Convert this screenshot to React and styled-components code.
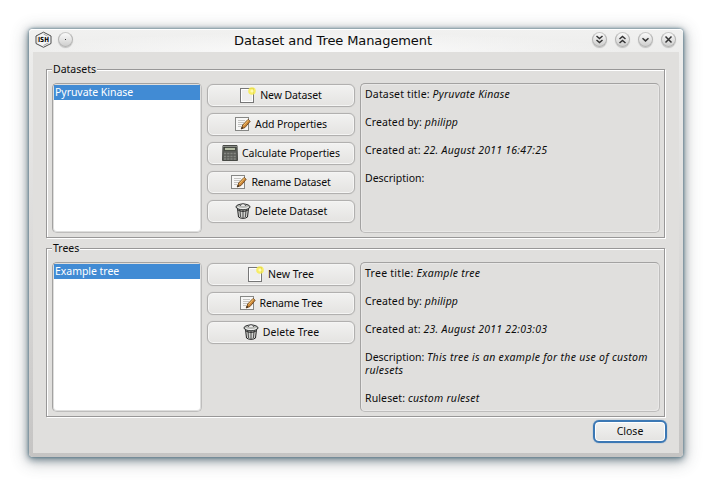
import React from "react";
import styled, { createGlobalStyle, css } from "styled-components";

const Global = createGlobalStyle`
  * { box-sizing: border-box; }
  body {
    margin: 0;
    background: #fff;
    color: #0c0c0c;
    font: 10.5px/13px "Noto Sans", "Open Sans", sans-serif;
    overflow: hidden;
  }
`;

const Desktop = styled.main`
  width: 712px;
  height: 486px;
  padding: 29px 29px 0;
`;

const Window = styled.section`
  width: 654px;
  height: 428px;
  padding: 0 4px 4px;
  border-radius: 4px;
  background: linear-gradient(#f1f1f0 0, #ececeb 30px, #d8d7d6 60%, #c5c4c3 100%);
  box-shadow: inset 0 1px 0 #fff, 0 0 3px #4d7385, 0 2px 7px 1px rgba(55, 85, 100, 0.6), 0 3px 16px 3px rgba(60, 70, 75, 0.3);
`;

const TitleBar = styled.header`
  height: 23px;
  display: grid;
  grid-template-columns: 46px 1fr 91px;
  align-items: center;
  margin: 0 -3px;
  padding: 0 6px 1px 5px;
  background: radial-gradient(ellipse at 45% 100%, #fcfcfc 0, rgba(250, 250, 250, 0) 60%);
`;

const Title = styled.h1`
  margin: 0;
  padding: 1px 0 0;
  font: 400 13px/22px "DejaVu Sans", sans-serif;
  letter-spacing: -0.1px;
  text-align: center;
  white-space: nowrap;
`;

const Controls = styled.div`
  display: flex;
  align-items: center;
  justify-content: ${(p) => (p.$end ? "flex-end" : "flex-start")};
  gap: ${(p) => p.$gap}px;
  margin-top: -3px;
`;

const RoundButton = styled.button`
  flex: none;
  display: grid;
  place-items: center;
  width: 15px;
  height: 15px;
  padding: 0;
  border: 1px solid #b4b4b3;
  border-top-color: #c8c8c7;
  border-radius: 50%;
  background: linear-gradient(#fafafa, #cfcfce);
  box-shadow: 0 1px 1px rgba(0, 0, 0, 0.2);
`;

const Content = styled.div`
  height: 401px;
  padding: 17px 12px 0 13px;
  background: #e0dfdd;
`;

const Group = styled.section`
  width: 619px;
  height: 169px;
  margin-bottom: 10px;
  border: 1px solid #989797;
  box-shadow: inset 1px 1px 0 #fff, 1px 1px 0 #fff;
`;

const Legend = styled.h2`
  width: max-content;
  height: 13px;
  margin: -7px 0 7px 5px;
  padding: 0 1px;
  font-size: inherit;
  font-weight: 400;
  background: #e0dfdd;
`;

const Columns = styled.div`
  display: grid;
  grid-template: 150px / 150px 148px 300px;
  column-gap: 5px;
  margin-left: 5px;
`;

const frame = css`
  border: 1px solid #a3a2a1;
  border-right-color: #bebdbc;
  border-bottom-color: #bebdbc;
  border-radius: 5px;
`;

const List = styled.div`
  ${frame}
  padding: 1px;
  background: #fff;
  box-shadow: inset 0 0 0 1px #dededd;
`;

const ListItem = styled.div`
  height: 15px;
  padding-left: 1px;
  line-height: 14px;
  letter-spacing: -0.04px;
  color: #fff;
  background: #418bd4;
`;

const Actions = styled.div`
  display: flex;
  flex-direction: column;
  gap: 6px;
  padding-top: 1px;
`;

const Button = styled.button`
  display: flex;
  align-items: center;
  justify-content: center;
  gap: 4px;
  width: ${(p) => (p.$focused ? 74 : 148)}px;
  height: 23px;
  flex: none;
  padding: 0 0 1px;
  border: ${(p) => (p.$focused ? "2px solid #3c78b4" : "1px solid #b1b0af")};
  border-radius: 6px;
  color: #0c0c0c;
  font: inherit;
  line-height: 12px;
  letter-spacing: ${(p) => p.$spacing}px;
  white-space: nowrap;
  background: linear-gradient(#f2f2f1, #e4e3e1);
  box-shadow: ${(p) =>
    p.$focused
      ? "inset 0 0 0 1px #fff, 0 0 1px #3c78b4"
      : "inset 0 0 0 1px #f5f5f4, 0 0 1px #b5b4b3"};
`;

const Info = styled.div`
  ${frame}
  padding: 4px 4px 0;
  box-shadow: inset 1px 1px 0 #e9e8e7, inset -1px -1px 0 #e9e8e7;
`;

const Field = styled.p`
  margin: 0 0 15px;
  letter-spacing: ${(p) => p.$spacing}px;

  &:last-child {
    margin-bottom: 0;
  }
`;

const Value = styled.em`
  letter-spacing: ${(p) => p.$spacing}px;
`;

const Footer = styled.footer`
  display: flex;
  justify-content: flex-end;
  margin: -7px 0 0;
`;

const AppLogo = () => (
  <svg width="18" height="18" viewBox="0 0 18 18">
    <path d="M8.5 2.2 16 6v7.5L8.500 17.3 1 13.500V6z" fill="#f4f4f4" stroke="#4b4b4b" />
    <path d="m8.5 4 5.5 3M3 7v5.500M14 12.500l-5.500 3" fill="none" stroke="#888" strokeWidth=".7" />
    <rect x="2.5" y="6.5" width="12" height="6" fill="#f4f4f4" />
    <text x="8.5" y="12.3" textAnchor="middle" fontSize="7" fontWeight="700" fontFamily="DejaVu Sans" textLength="11" lengthAdjust="spacingAndGlyphs">ISH</text>
  </svg>
);

const glyphs = {
  dot: "M6 6.5h1",
  below: "m3.5 3 3 2.5 3-2.5m-6 4 3 2.5 3-2.5",
  above: "m3.5 6 3-2.5 3 2.5m-6 4 3-2.5 3 2.5",
  minimize: "m3.5 5.3 3 2.6 3-2.6",
  close: "m3.5 3.5 6 6m0-6-6 6",
};

const Glyph = ({ name }) => (
  <svg width="13" height="13" viewBox="0 0 13 13">
    <path d={glyphs[name]} fill="none" stroke="#333" strokeWidth={name === "dot" ? 1 : 1.5} />
  </svg>
);

const NewIcon = () => (
  <svg width="16" height="16" viewBox="0 0 16 16">
    <rect x=".5" y="1.5" width="13" height="14" fill="#eeeeed" stroke="#777" />
    <path d="M1.5 14.5v-12h11v12z" fill="none" stroke="#fff" />
    <circle cx="12" cy="4" r="3.8" fill="#f8ec4c" fillOpacity=".85" />
    <circle cx="12" cy="4" r="1.6" fill="#fffbb0" />
  </svg>
);

const EditIcon = () => (
  <svg width="16" height="16" viewBox="0 0 16 16">
    <rect x=".5" y="1.5" width="13" height="13" fill="#f7f7f6" stroke="#868785" />
    <path d="M3 4.5h7M3 6.5h6M3 8.5h5M3 10.5h3" stroke="#c4c4c2" />
    <path d="m6.2 13 1.5-4L13 3.5l2.2 1.8-5.2 6.2z" fill="#cf8a3b" stroke="#6c4319" strokeWidth=".9" />
    <path d="m8.5 9.5 5-5.5" stroke="#f5c66b" />
    <path d="m6.2 13 .8-2.2 1.2 1.2z" fill="#222" />
  </svg>
);

const CalculatorIcon = () => (
  <svg width="16" height="16" viewBox="0 0 16 16">
    <path d="M1 .5h14l.5 15H.5z" fill="#5b5d59" stroke="#484a46" />
    <path d="M1 1.5h14" stroke="#8b8d88" />
    <rect x="2.5" y="2.5" width="11" height="3" fill="#b5bda5" stroke="#393c36" strokeWidth=".8" />
    <path d="M2 8.5h12M2 11.5h12M2 14h12" stroke="#858782" strokeWidth="1.6" strokeDasharray="2.2 1" />
  </svg>
);

const TrashIcon = () => (
  <svg width="16" height="16" viewBox="0 0 16 16">
    <path d="m2.5 5.5 1 8.5c1.7 1.8 7.3 1.8 9 0l1-8.5z" fill="#d3d4d1" stroke="#222" />
    <path d="m5 7 .6 7M8 7v8m3-8-.6 7" stroke="#555" strokeWidth="1.1" />
    <path d="M3.2 7.2c2 1.5 7.6 1.5 9.6 0" fill="none" stroke="#222" />
    <ellipse cx="8" cy="3.9" rx="7" ry="2.9" fill="#b9bbb7" stroke="#2e3131" />
    <path d="M2.5 4.2c2 1.8 9 1.8 11 0" fill="none" stroke="#f2f2f2" />
    <path d="M5.5 3c0-3 5-3 5 0" fill="#eee" stroke="#555" />
  </svg>
);

const icons = { new: NewIcon, edit: EditIcon, calculator: CalculatorIcon, trash: TrashIcon };

/* Actions are [icon, label, tracking]; fields are [label, value, label tracking, value tracking]. */
const groups = [
  {
    title: "Datasets",
    selected: "Pyruvate Kinase",
    actions: [
      ["new", "New Dataset", -0.1],
      ["edit", "Add Properties", -0.1],
      ["calculator", "Calculate Properties", -0.04],
      ["edit", "Rename Dataset", -0.15],
      ["trash", "Delete Dataset", 0],
    ],
    fields: [
      ["Dataset title:", "Pyruvate Kinase", 0.16, 0.24],
      ["Created by:", "philipp", 0.1, 0.1],
      ["Created at:", "22. August 2011 16:47:25", 0.15, 0.25],
      ["Description:", "", 0, 0],
    ],
  },
  {
    title: "Trees",
    selected: "Example tree",
    actions: [
      ["new", "New Tree", 0],
      ["edit", "Rename Tree", -0.15],
      ["trash", "Delete Tree", 0.05],
    ],
    fields: [
      ["Tree title:", "Example tree", 0.26, 0.28],
      ["Created by:", "philipp", 0.1, 0.1],
      ["Created at:", "23. August 2011 22:03:03", 0.15, 0.25],
      ["Description:", "This tree is an example for the use of custom rulesets", 0, 0.3],
      ["Ruleset:", "custom ruleset", 0.12, 0.24],
    ],
  },
];

const ManagementGroup = ({ title, selected, actions, fields }) => (
  <Group>
    <Legend>{title}</Legend>
    <Columns>
      <List>
        <ListItem>{selected}</ListItem>
      </List>
      <Actions>
        {actions.map(([icon, label, spacing]) => {
          const Icon = icons[icon];
          return (
            <Button key={label} $spacing={spacing}>
              <Icon />
              {label}
            </Button>
          );
        })}
      </Actions>
      <Info>
        {fields.map(([label, value, labelSpacing, valueSpacing]) => (
          <Field key={label} $spacing={labelSpacing}>
            {label} <Value $spacing={valueSpacing}>{value}</Value>
          </Field>
        ))}
      </Info>
    </Columns>
  </Group>
);

export default function App() {
  return (
    <Desktop>
      <Global />
      <Window>
        <TitleBar>
          <Controls $gap={5}>
            <AppLogo />
            <RoundButton><Glyph name="dot" /></RoundButton>
          </Controls>
          <Title>Dataset and Tree Management</Title>
          <Controls $gap={8} $end>
            {["below", "above", "minimize", "close"].map((name) => (
              <RoundButton key={name}><Glyph name={name} /></RoundButton>
            ))}
          </Controls>
        </TitleBar>
        <Content>
          {groups.map((group) => <ManagementGroup key={group.title} {...group} />)}
          <Footer><Button $focused $spacing={0}>Close</Button></Footer>
        </Content>
      </Window>
    </Desktop>
  );
}
